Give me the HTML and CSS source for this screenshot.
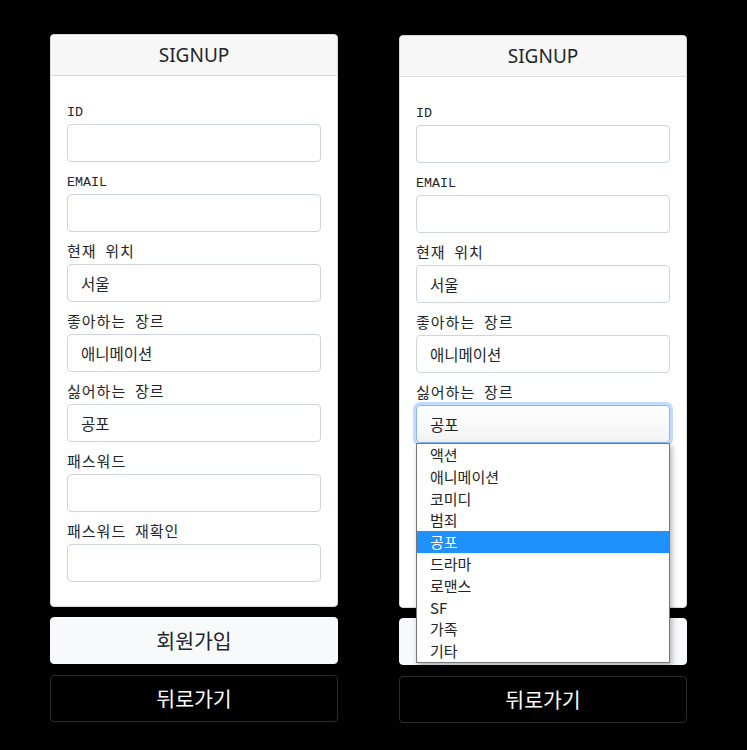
FILE: index.html
```html
<!DOCTYPE html>
<html lang="ko">
<head>
<meta charset="utf-8">
<title>SIGNUP</title>
<link rel="stylesheet" href="styles.css">
</head>
<body>
<main class="page">
  <section class="column">
    <form class="card">
      <div class="card-header">SIGNUP</div>
      <div class="card-body">
        <div class="group">
          <label class="label">ID</label>
          <input class="field" type="text">
        </div>
        <div class="group">
          <label class="label">EMAIL</label>
          <input class="field" type="email">
        </div>
        <div class="group">
          <label class="label label-ko">현재 위치</label>
          <select class="field select"><option>서울</option></select>
        </div>
        <div class="group">
          <label class="label label-ko">좋아하는 장르</label>
          <select class="field select"><option>애니메이션</option></select>
        </div>
        <div class="group">
          <label class="label label-ko">싫어하는 장르</label>
          <select class="field select"><option>공포</option></select>
        </div>
        <div class="group">
          <label class="label label-ko">패스워드</label>
          <input class="field" type="password">
        </div>
        <div class="group">
          <label class="label label-ko">패스워드 재확인</label>
          <input class="field" type="password">
        </div>
      </div>
    </form>
    <button class="btn btn-light" type="button">회원가입</button>
    <button class="btn btn-dark" type="button">뒤로가기</button>
  </section>

  <section class="column column-shift">
    <form class="card">
      <div class="card-header">SIGNUP</div>
      <div class="card-body">
        <div class="group">
          <label class="label">ID</label>
          <input class="field" type="text">
        </div>
        <div class="group">
          <label class="label">EMAIL</label>
          <input class="field" type="email">
        </div>
        <div class="group">
          <label class="label label-ko">현재 위치</label>
          <select class="field select"><option>서울</option></select>
        </div>
        <div class="group">
          <label class="label label-ko">좋아하는 장르</label>
          <select class="field select"><option>애니메이션</option></select>
        </div>
        <div class="group group-open">
          <label class="label label-ko">싫어하는 장르</label>
          <select class="field select focused"><option>공포</option></select>
          <ul class="dropdown">
            <li class="option">액션</li>
            <li class="option">애니메이션</li>
            <li class="option">코미디</li>
            <li class="option">범죄</li>
            <li class="option selected">공포</li>
            <li class="option">드라마</li>
            <li class="option">로맨스</li>
            <li class="option">SF</li>
            <li class="option">가족</li>
            <li class="option">기타</li>
          </ul>
        </div>
        <div class="group">
          <label class="label label-ko">패스워드</label>
          <input class="field" type="password">
        </div>
        <div class="group">
          <label class="label label-ko">패스워드 재확인</label>
          <input class="field" type="password">
        </div>
      </div>
    </form>
    <button class="btn btn-light" type="button">회원가입</button>
    <button class="btn btn-dark" type="button">뒤로가기</button>
  </section>
</main>
</body>
</html>
```

FILE: styles.css
```css
* { box-sizing: border-box; }

html, body {
  margin: 0;
  padding: 0;
  background: #000;
}

body {
  font-family: "Noto Sans", "Noto Sans CJK KR", sans-serif;
  color: #212529;
}

.page {
  display: flex;
  gap: 61px;
  padding: 34px 0 0 50px;
  height: 750px;
}

.column {
  width: 288px;
  display: flex;
  flex-direction: column;
}

.column-shift {
  padding-top: 1px;
}

.card {
  margin: 0;
  background: #fff;
  border: 1px solid #d9d9d9;
  border-radius: 4px;
}

.card-header {
  background: #f7f7f7;
  border-bottom: 1px solid #dcdcdc;
  border-radius: 3px 3px 0 0;
  padding: 8px 16px;
  height: 41px;
  line-height: 24px;
  font-family: "Noto Sans", sans-serif;
  font-size: 19px;
  text-align: center;
  color: #212529;
}

.card-body {
  padding: 25px 16px 24px;
}

.group {
  margin-bottom: 9px;
}

.group:last-child {
  margin-bottom: 0;
}

.group-open {
  position: relative;
}

.label {
  display: block;
  height: 20px;
  line-height: 24px;
  margin-bottom: 3px;
  font-family: "Liberation Mono", monospace;
  font-size: 13.33px;
  color: #212529;
}

.label-ko {
  line-height: 20px;
  font-family: "Noto Sans CJK KR", sans-serif;
  font-size: 15px;
  letter-spacing: 1px;
  word-spacing: 3.5px;
}

.field {
  display: block;
  width: 100%;
  height: 38px;
  margin: 0;
  padding: 0 13px;
  border: 1px solid #ced4da;
  border-radius: 4px;
  background: #fff;
  font-family: "Noto Sans CJK KR", sans-serif;
  font-size: 15.5px;
  color: #212529;
  outline: none;
}

.select {
  -webkit-appearance: none;
  appearance: none;
}

.focused {
  border-color: #86b7fe;
  background: linear-gradient(#ffffff, #f3f3f3);
  box-shadow: 0 0 0 3px rgba(13, 110, 253, 0.25);
}

.dropdown {
  position: absolute;
  left: 0;
  top: 61px;
  width: 254px;
  margin: 0;
  padding: 0;
  list-style: none;
  background: #fff;
  border: 1px solid #767676;
  box-shadow: 2px 3px 6px rgba(0, 0, 0, 0.3);
  z-index: 5;
}

.option {
  height: 21.8px;
  line-height: 21.8px;
  padding: 0 13px;
  font-family: "Noto Sans CJK KR", sans-serif;
  font-size: 15px;
  color: #212529;
}

.option.selected {
  background: #1e90ff;
  color: #fff;
}

.btn {
  display: block;
  width: 100%;
  height: 47px;
  margin: 10px 0 0;
  padding: 0;
  border-radius: 4px;
  font-family: "Noto Sans CJK KR", sans-serif;
  font-size: 20.5px;
  line-height: 45px;
  text-align: center;
  cursor: pointer;
}

.btn-light {
  background: #f8f9fa;
  border: 1px solid #f8f9fa;
  color: #212529;
}

.btn-dark {
  margin-top: 11px;
  background: #000;
  border: 1px solid #2a2c2f;
  color: #fff;
}
```
